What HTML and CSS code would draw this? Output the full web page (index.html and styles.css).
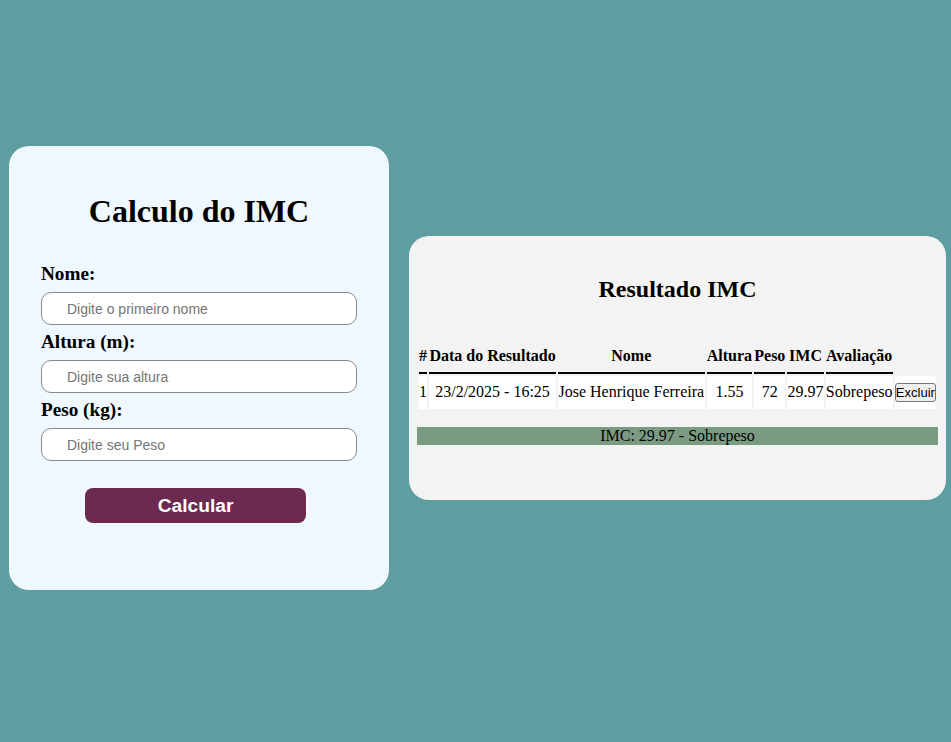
FILE: index.html
```html
<!DOCTYPE html>
<html lang="pt-BR">
<head>
<meta charset="UTF-8">
<title>Calculo do IMC</title>
<link rel="stylesheet" href="styles.css">
</head>
<body>
  <div class="card form-card">
    <h1 class="title">Calculo do IMC</h1>
    <form class="form">
      <label class="label" for="nome">Nome:</label>
      <input class="input" id="nome" type="text" placeholder="Digite o primeiro nome">
      <label class="label" for="altura">Altura (m):</label>
      <input class="input" id="altura" type="text" placeholder="Digite sua altura">
      <label class="label" for="peso">Peso (kg):</label>
      <input class="input" id="peso" type="text" placeholder="Digite seu Peso">
      <button class="calc-btn" type="button">Calcular</button>
    </form>
  </div>
  <div class="card result-card">
    <h2 class="subtitle">Resultado IMC</h2>
    <table class="table">
      <thead>
        <tr>
          <th>#</th>
          <th>Data do Resultado</th>
          <th>Nome</th>
          <th>Altura</th>
          <th>Peso</th>
          <th>IMC</th>
          <th>Avaliação</th>
        </tr>
      </thead>
      <tbody>
        <tr>
          <td>1</td>
          <td>23/2/2025 - 16:25</td>
          <td>Jose Henrique Ferreira</td>
          <td>1.55</td>
          <td>72</td>
          <td>29.97</td>
          <td>Sobrepeso</td>
          <td><button class="del-btn" type="button">Excluir</button></td>
        </tr>
      </tbody>
    </table>
    <div class="result-bar">IMC: 29.97 - Sobrepeso</div>
  </div>
</body>
</html>
```

FILE: styles.css
```css
html, body {
  margin: 0;
  padding: 0;
}

body {
  background: #5f9ea0;
  font-family: "Liberation Serif", "Times New Roman", serif;
  color: #000;
  height: 736px;
  display: flex;
  align-items: center;
  padding-left: 9px;
  gap: 20px;
}

.card {
  box-sizing: border-box;
  border-radius: 20px;
}

.form-card {
  width: 380px;
  height: 444px;
  background: #f0f8ff;
  padding: 26px 32px 0;
}

.title {
  font-size: 32px;
  font-weight: bold;
  text-align: center;
  margin: 21px 0 33px;
  line-height: 37px;
}

.form {
  margin: 0;
}

.label {
  display: block;
  font-size: 19.2px;
  font-weight: bold;
  line-height: 21px;
  margin-bottom: 8px;
}

.input {
  display: block;
  box-sizing: border-box;
  width: 100%;
  height: 33px;
  margin: 0 0 6px;
  padding: 0 10px 0 25px;
  border: 1px solid #8a8a8a;
  border-radius: 10px;
  background: #fff;
  font-family: "Liberation Sans", Arial, sans-serif;
  font-size: 14px;
  outline: none;
}

.input::placeholder {
  color: #757575;
}

.calc-btn {
  display: block;
  box-sizing: border-box;
  width: 70%;
  height: 35px;
  margin: 27px 0 0 44px;
  padding: 0;
  border: none;
  border-radius: 8px;
  background: #6c2a51;
  color: #fff;
  font-family: "Liberation Sans", Arial, sans-serif;
  font-size: 19.2px;
  font-weight: bold;
}

.result-card {
  width: 537px;
  background: #f3f3f3;
  padding: 20px 8px 55px;
}

.subtitle {
  font-size: 24px;
  font-weight: bold;
  text-align: center;
  margin: 20px 0 36px;
  line-height: 27.6px;
}

.table {
  width: 100%;
  border-spacing: 2px;
  margin: 0;
  font-size: 16px;
}

.table th {
  padding: 6px 0;
  line-height: 18.4px;
  border-bottom: 2px solid #000;
  font-weight: bold;
  white-space: nowrap;
}

.table td {
  padding: 7px 0;
  line-height: 18.4px;
  background: #fff;
  text-align: center;
  white-space: nowrap;
}

.del-btn {
  font-family: "Liberation Sans", Arial, sans-serif;
  font-size: 13px;
  padding: 1px 0;
  border: 1px solid #767676;
  border-radius: 3px;
  background: #efefef;
  color: #000;
  line-height: 15px;
}

.result-bar {
  margin-top: 16px;
  background: #7a9a81;
  text-align: center;
  font-size: 16px;
  line-height: 18.4px;
}
```
